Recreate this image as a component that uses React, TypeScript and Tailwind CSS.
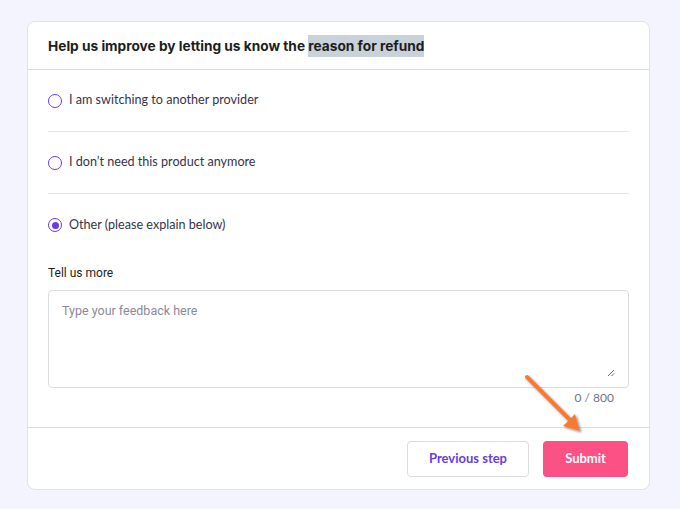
import React from "react";

function Radio({ checked }: { checked?: boolean }) {
  return (
    <span className="flex h-[14px] w-[14px] shrink-0 items-center justify-center rounded-full border-[1.5px] border-[#673de6] bg-white">
      {checked && <span className="h-[7px] w-[7px] rounded-full bg-[#673de6]" />}
    </span>
  );
}

function Option({ label, checked, last }: { label: string; checked?: boolean; last?: boolean }) {
  return (
    <div className={`flex h-[62px] items-center gap-[7px] ${last ? "" : "border-b border-[#e3e3e8]"}`}>
      <Radio checked={checked} />
      <span className="text-[12.6px] text-[#36344d]">{label}</span>
    </div>
  );
}

export default function App() {
  return (
    <div
      className="relative min-h-[509px] w-[680px] bg-[#f4f4fe] pl-[27px] pt-[21px]"
      style={{ fontFamily: "Lato, 'Noto Sans', sans-serif" }}
    >
      <div className="w-[623px] overflow-hidden rounded-[8px] border border-[#e1e1ea] bg-white">
        <div className="flex h-[48px] items-center border-b border-[#dadce0] px-[20px] pt-[1px]">
          <h1 className="text-[14px] font-bold text-[#1d1e20]" style={{ fontFamily: "Inter, sans-serif", fontSize: "13.7px" }}>
            Help us improve by letting us know the{" "}
            <span className="bg-[#c9d1d9] py-[3px]">reason for refund</span>
          </h1>
        </div>
        <div className="px-[20px]">
          <Option label="I am switching to another provider" />
          <Option label="I don’t need this product anymore" />
          <Option label="Other (please explain below)" checked last />
          <div
            className="mt-[8px] text-[12px] text-[#1d1e20]"
            style={{ fontFamily: "Roboto, sans-serif" }}
          >
            Tell us more
          </div>
          <div className="mt-[8px] flex h-[98px] flex-col rounded-[4px] border border-[#dadce0] px-[13px] pt-[11px]">
            <span
              className="text-[12.5px] text-[#8b8a99]"
              style={{ fontFamily: "Roboto, sans-serif" }}
            >
              Type your feedback here
            </span>
            <div className="mt-auto flex justify-end pb-[10px]">
              <svg width="8" height="8" viewBox="0 0 8 8">
                <path d="M7 1 L1 7 M7 4.5 L4.5 7" stroke="#6b6b6b" strokeWidth="1" />
              </svg>
            </div>
          </div>
          <div className="mt-[1px] flex h-[18px] justify-end pr-[15px] text-[12px] text-[#727586]">0 / 800</div>
        </div>
        <div className="mt-[20px] flex h-[62px] items-center justify-end gap-[14px] border-t border-[#dadce0] px-[21px]">
          <button className="h-[36px] w-[122px] rounded-[4px] border border-[#dadce0] bg-white text-[13px] font-bold text-[#673de6]">
            Previous step
          </button>
          <button className="h-[36px] w-[85px] rounded-[4px] bg-[#fc5185] text-[13px] font-bold text-white">
            Submit
          </button>
        </div>
      </div>
      <svg className="pointer-events-none absolute left-[515px] top-[369px]" width="80" height="75" viewBox="0 0 80 75">
        <defs>
          <filter id="sh" x="-20%" y="-20%" width="140%" height="140%">
            <feDropShadow dx="1.5" dy="1.5" stdDeviation="1" floodColor="#000" floodOpacity="0.45" />
          </filter>
        </defs>
        <g filter="url(#sh)">
          <line x1="12" y1="8" x2="56" y2="52" stroke="#f47a35" strokeWidth="4" strokeLinecap="round" />
          <polygon points="65,62 48,57 60,45" fill="#f47a35" />
        </g>
      </svg>
    </div>
  );
}
